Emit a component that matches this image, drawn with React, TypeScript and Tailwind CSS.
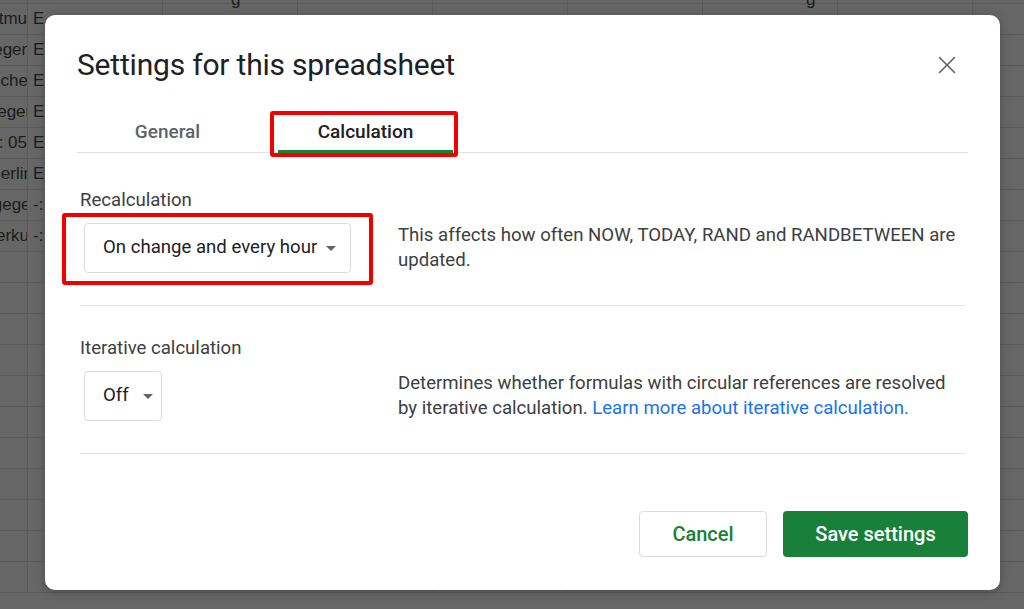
import { X } from 'lucide-react'

// dimmed sheet behind the modal
const leftTails = [
  { text: 'Dortmu', cut: 'mr-0' },
  { text: 'gegen', cut: 'mr-[-4px]' },
  { text: 'Münche', cut: 'mr-[-1px]' },
  { text: 'gegen', cut: 'mr-[-8px]' },
  { text: 'um: 05', cut: 'mr-0' },
  { text: 'Berlin', cut: 'mr-[-6px]' },
  { text: 'gegen', cut: 'mr-[-13px]' },
  { text: 'Leverku', cut: 'mr-[-2px]' },
]

const ROWS = 20

function SheetBackdrop() {
  return (
    <div className="-mt-[27px] flex flex-col font-['Liberation_Sans',Arial,sans-serif] text-[17px] text-[#1c1c1c]">
      {Array.from({ length: ROWS }).map((_, r) => {
        const tail = r >= 1 && r <= 8 ? leftTails[r - 1] : null
        const second = r >= 1 && r <= 6 ? 'E' : r === 7 || r === 8 ? '-:' : ''
        return (
          <div key={r} className="flex h-[31px] shrink-0 border-b border-[#5b5b5b]">
            <div className="flex w-[28px] shrink-0 items-center justify-end overflow-hidden border-r border-[#5b5b5b]">
              {tail && <span className={`whitespace-nowrap ${tail.cut}`}>{tail.text}</span>}
            </div>
            <div className="flex w-[135px] shrink-0 items-center border-r border-[#5b5b5b] pl-[5px]">
              {second}
            </div>
            <div className="flex w-[135px] shrink-0 items-end border-r border-[#5b5b5b] pl-[68px]">
              {r === 0 && <span className="mb-[-9px]">g</span>}
            </div>
            <div className="w-[135px] shrink-0 border-r border-[#5b5b5b]" />
            <div className="w-[135px] shrink-0 border-r border-[#5b5b5b]" />
            <div className="w-[135px] shrink-0 border-r border-[#5b5b5b]" />
            <div className="flex w-[135px] shrink-0 items-end border-r border-[#5b5b5b] pl-[103px]">
              {r === 0 && <span className="mb-[-9px]">g</span>}
            </div>
            <div className="w-[135px] shrink-0 border-r border-[#5b5b5b]" />
          </div>
        )
      })}
    </div>
  )
}

function Caret() {
  return (
    <svg width="10" height="5" viewBox="0 0 10 5" className="shrink-0">
      <path d="M0 0h10L5 5z" fill="#5f6368" />
    </svg>
  )
}

function Select({ value, wide }: { value: string; wide?: boolean }) {
  return (
    <div
      className={`ml-[4px] flex h-[50px] items-center justify-between rounded-[4px] border border-[#dadce0] pl-[18px] text-[18.6px] text-[#202124] ${
        wide ? 'w-[267px] pr-[14px]' : 'w-[78px] pr-[8px]'
      }`}
    >
      <span className="whitespace-nowrap">{value}</span>
      <Caret />
    </div>
  )
}

function Marker({ className }: { className: string }) {
  return (
    <div
      className={`pointer-events-none absolute rounded-[3px] border-[4px] border-[#f20000] ${className}`}
    />
  )
}

export default function App() {
  return (
    <div className="relative h-[609px] w-[1024px] overflow-hidden bg-[#666666]">
      <SheetBackdrop />

      <div className="absolute left-[45px] top-[15px] flex h-[575px] w-[955px] flex-col rounded-[10px] bg-white px-[32px] pt-[32px] font-['Roboto',sans-serif] shadow-[0_2px_10px_rgba(0,0,0,0.25)]">
        <div className="mb-[29px] flex h-[36px] items-center justify-between">
          <h1 className="text-[30px] font-normal leading-[36px] tracking-[-0.2px] text-[#202124]">
            Settings for this spreadsheet
          </h1>
          <button type="button" className="mr-[6px] flex h-[30px] w-[30px] items-center justify-center text-[#5f6368]" aria-label="Close">
            <X size={30} strokeWidth={1.3} />
          </button>
        </div>

        <div className="flex h-[41px] gap-[23px] border-b border-[#e0e0e0] pl-[3px]">
          <div className="flex w-[175px] items-center justify-center text-[19px] font-medium text-[#5f6368]">
            General
          </div>
          <div className="relative flex w-[175px] items-center justify-center text-[19px] font-medium text-[#202124]">
            Calculation
            <div className="absolute bottom-[-1px] left-0 right-0 h-[3px] bg-[#188038]" />
            <Marker className="-left-[8px] -right-[5px] -top-[1px] -bottom-[5px]" />
          </div>
        </div>

        <section className="mx-[3px] border-b border-[#e0e0e0] pb-[32px] pt-[35px]">
          <div className="text-[18.6px] leading-[24px] text-[#3c4043]">Recalculation</div>
          <div className="mt-[11px] flex items-start">
            <div className="relative w-[318px] shrink-0">
              <Select value="On change and every hour" wide />
              <Marker className="-left-[18px] -top-[10px] h-[72px] w-[311px]" />
            </div>
            <p className="whitespace-nowrap text-[18.6px] leading-[25px] text-[#3c4043]">
              This affects how often NOW, TODAY, RAND and RANDBETWEEN are
              <br />
              updated.
            </p>
          </div>
        </section>

        <section className="mx-[3px] border-b border-[#e0e0e0] pb-[32px] pt-[30px]">
          <div className="text-[18.6px] leading-[24px] text-[#3c4043]">Iterative calculation</div>
          <div className="mt-[11px] flex items-start">
            <div className="w-[318px] shrink-0">
              <Select value="Off" />
            </div>
            <p className="whitespace-nowrap text-[18.6px] leading-[25px] text-[#3c4043]">
              Determines whether formulas with circular references are resolved
              <br />
              by iterative calculation.{' '}
              <a className="text-[#1a73e8]">Learn more about iterative calculation.</a>
            </p>
          </div>
        </section>

        <div className="mt-auto flex justify-end gap-[16px] pb-[33px]">
          <button
            type="button"
            className="h-[46px] w-[128px] rounded-[4px] border border-[#dadce0] bg-white text-[20px] font-medium text-[#188038]"
          >
            Cancel
          </button>
          <button
            type="button"
            className="h-[46px] w-[185px] rounded-[4px] bg-[#188038] text-[20px] font-medium text-white"
          >
            Save settings
          </button>
        </div>
      </div>
    </div>
  )
}
